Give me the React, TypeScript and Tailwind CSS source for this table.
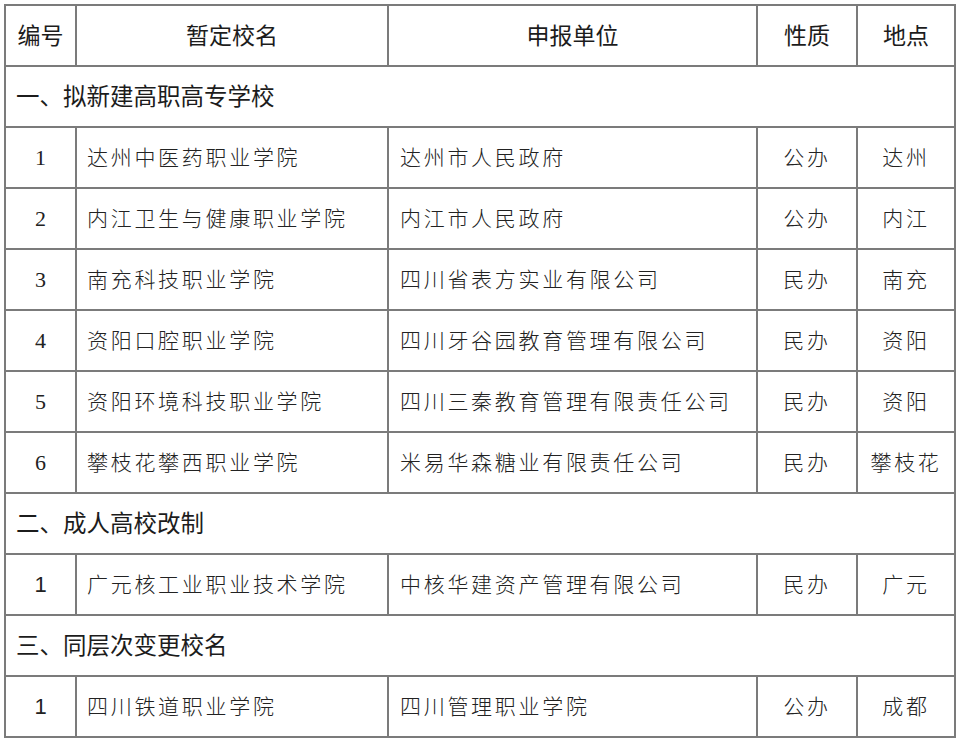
import React from "react";

type Row =
  | { kind: "section"; title: string }
  | { kind: "data"; no: string; serifNo: boolean; name: string; unit: string; nature: string; place: string };

const rows: Row[] = [
  { kind: "section", title: "一、拟新建高职高专学校" },
  { kind: "data", no: "1", serifNo: true, name: "达州中医药职业学院", unit: "达州市人民政府", nature: "公办", place: "达州" },
  { kind: "data", no: "2", serifNo: true, name: "内江卫生与健康职业学院", unit: "内江市人民政府", nature: "公办", place: "内江" },
  { kind: "data", no: "3", serifNo: true, name: "南充科技职业学院", unit: "四川省表方实业有限公司", nature: "民办", place: "南充" },
  { kind: "data", no: "4", serifNo: true, name: "资阳口腔职业学院", unit: "四川牙谷园教育管理有限公司", nature: "民办", place: "资阳" },
  { kind: "data", no: "5", serifNo: true, name: "资阳环境科技职业学院", unit: "四川三秦教育管理有限责任公司", nature: "民办", place: "资阳" },
  { kind: "data", no: "6", serifNo: true, name: "攀枝花攀西职业学院", unit: "米易华森糖业有限责任公司", nature: "民办", place: "攀枝花" },
  { kind: "section", title: "二、成人高校改制" },
  { kind: "data", no: "1", serifNo: false, name: "广元核工业职业技术学院", unit: "中核华建资产管理有限公司", nature: "民办", place: "广元" },
  { kind: "section", title: "三、同层次变更校名" },
  { kind: "data", no: "1", serifNo: false, name: "四川铁道职业学院", unit: "四川管理职业学院", nature: "公办", place: "成都" },
];

const cell = "bg-white h-[59px] flex items-center";
const sans = "font-['Noto_Sans_CJK_SC',sans-serif]";
const head = `${sans} text-[23px] text-[#1c1c1c] pb-[2px]`;
const dataText = "font-['Noto_Sans_CJK_SC',sans-serif] font-light text-[21px] tracking-[2.7px] text-[#222] pb-[1px]";

export default function App() {
  return (
    <div className="w-[960px] h-[740px] bg-white pt-[4px] pl-[4px]">
      <div className="inline-grid grid-cols-[69px_310px_367px_98px_96px] gap-[2px] p-[2px] bg-[#7b7b7b]">
        <div className={`${cell} justify-center ${head}`}>编号</div>
        <div className={`${cell} justify-center ${head}`}>暂定校名</div>
        <div className={`${cell} justify-center ${head}`}>申报单位</div>
        <div className={`${cell} justify-center ${head}`}>性质</div>
        <div className={`${cell} justify-center ${head}`}>地点</div>
        {rows.map((r, i) =>
          r.kind === "section" ? (
            <div key={i} className={`${cell} col-span-5 pl-[10px] ${sans} text-[23.5px] text-[#1c1c1c] pb-[2px]`}>
              {r.title}
            </div>
          ) : (
            <React.Fragment key={i}>
              <div
                className={`${cell} justify-center text-[22px] text-[#222] ${
                  r.serifNo ? "font-['Liberation_Serif',serif]" : "font-['Liberation_Sans',sans-serif]"
                }`}
              >
                {r.no}
              </div>
              <div className={`${cell} pl-[10px] ${dataText}`}>{r.name}</div>
              <div className={`${cell} pl-[11px] ${dataText}`}>{r.unit}</div>
              <div className={`${cell} justify-center ${dataText}`}>{r.nature}</div>
              <div className={`${cell} justify-center ${dataText}`}>{r.place}</div>
            </React.Fragment>
          )
        )}
      </div>
    </div>
  );
}
